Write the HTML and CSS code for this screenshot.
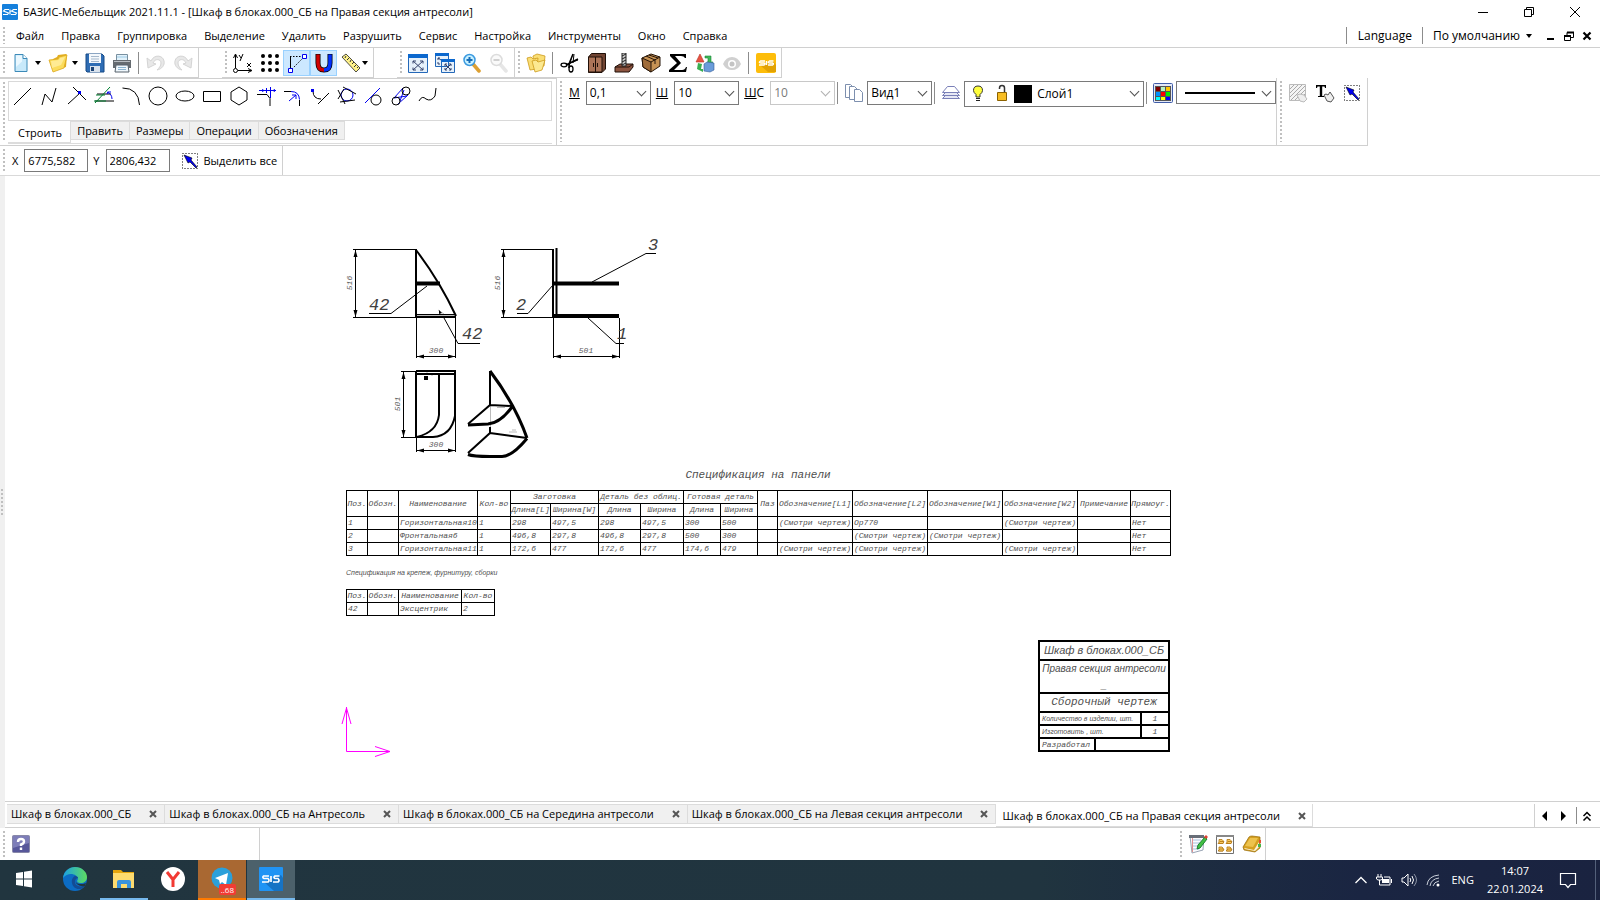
FILE: index.html
```html
<!DOCTYPE html>
<html lang="ru">
<head>
    <meta charset="UTF-8">
    <meta name="viewport" content="width=device-width, initial-scale=1.0">
    <title>БАЗИС-Мебельщик</title>
    <link rel="stylesheet" href="styles.css">
</head>
<body>
    <header class="title-bar">
        <svg class="app-logo" width="16" height="16" viewBox="0 0 16 16"><rect width="16" height="16" rx="1" fill="#1580dc"/><path d="M7 5.500H3L1.500 7l5 2-1 1.500H1M8 5.500v5M15 5.500h-3.500L9.500 7l5 2-1 1.500H9" fill="none" stroke="#fff" stroke-width="1.200"/></svg>
        <h1 class="title-text">БАЗИС-Мебельщик 2021.11.1 - [Шкаф в блоках.000_СБ на Правая секция антресоли]</h1>
        <div class="window-buttons">
            <button aria-label="Свернуть"><svg width="12" height="12" viewBox="0 0 12 12"><path d="M1 6.500h10" stroke="#000"/></svg></button>
            <button aria-label="Восстановить"><svg width="12" height="12" viewBox="0 0 12 12"><path d="M1.500 3.500h7v7h-7zM3.500 3.500v-2h7v7h-2" fill="none" stroke="#000"/></svg></button>
            <button aria-label="Закрыть"><svg width="12" height="12" viewBox="0 0 12 12"><path d="M1 1l10 10M11 1L1 11" stroke="#000"/></svg></button>
        </div>
    </header>

    <nav class="menu-bar">
        <span class="grip"></span>
        <div class="menu-items">
            <button>Файл</button>
            <button>Правка</button>
            <button>Группировка</button>
            <button>Выделение</button>
            <button>Удалить</button>
            <button>Разрушить</button>
            <button>Сервис</button>
            <button>Настройка</button>
            <button>Инструменты</button>
            <button>Окно</button>
            <button>Справка</button>
        </div>
        <div class="menu-right">
            <button class="menu-lang">Language</button>
            <button class="menu-theme">По умолчанию <span class="caret"></span></button>
            <button aria-label="Свернуть документ"><svg width="10" height="10" viewBox="0 0 10 10"><path d="M1 8h7" stroke="#000" stroke-width="2"/></svg></button>
            <button aria-label="Восстановить документ"><svg width="10" height="10" viewBox="0 0 10 10"><path d="M.5 4.500h6v5h-6zM3 4V1.500h6.500v5H7" fill="none" stroke="#000"/><path d="M0 5h7M3 1.500h7" stroke="#000" stroke-width="2"/></svg></button>
            <button aria-label="Закрыть документ"><svg width="10" height="10" viewBox="0 0 10 10"><path d="M1.500 1.500l7 7M8.500 1.500l-7 7" stroke="#000" stroke-width="2.200"/></svg></button>
        </div>
    </nav>

    <div class="toolbar-row">
        <div class="toolbar">
            <span class="grip"></span>
            <button class="tool tool-drop" aria-label="Новый"><svg width="20" height="20" viewBox="0 0 20 20"><path d="M4 1.500h8l4 4v13H4z" fill="#c8e9fa" stroke="#3c8ab8"/><path d="M5 2.500h6v6L5 14z" fill="#eaf8ff"/><path d="M12 1.500v4h4" fill="#fff" stroke="#3c8ab8"/></svg><span class="caret"></span></button>
            <button class="tool tool-drop" aria-label="Открыть"><svg width="20" height="20" viewBox="0 0 20 20"><path d="M5 6l4-2 1-2 8-1 1 1-1 12-10 3z" fill="#e2ae20"/><path d="M1 7l9-1 1-2 8-2-3 13-11 4z" fill="#fbdc5c" stroke="#dca820" stroke-width=".8"/><path d="M3 8l8-1 1-2 5-1-4 8-9 3z" fill="#ffeb94"/></svg><span class="caret"></span></button>
            <button class="tool" aria-label="Сохранить"><svg width="20" height="20" viewBox="0 0 20 20"><path d="M1 1h16l2 2v16H2l-1-1z" fill="#2f6db4" stroke="#164a86"/><path d="M4 1h12v9H4z" fill="#f4f8fc"/><path d="M6 3.500h8M6 6h8M6 8.500h8" stroke="#a5b8cc"/><path d="M5 13h10v6H5z" fill="#d9e2ec"/><path d="M6 14h3v4H6z" fill="#1d4476"/></svg></button>
            <button class="tool" aria-label="Печать"><svg width="20" height="20" viewBox="0 0 20 20"><path d="M4.500 1.500h11V8h-11z" fill="#e2f2fb" stroke="#7890a0"/><path d="M1 7h18v8H1z" fill="#666b70"/><path d="M2 8.500h16" stroke="#b8bdc2"/><path d="M4 12h12l1 7H3z" fill="#f0f7fc" stroke="#56616a"/><path d="M6 14.500h8M6 16.500h8" stroke="#8cb4d0"/><path d="M5 4h10" stroke="#9ecbe6"/></svg></button>
            <span class="separator"></span>
            <button class="tool" aria-label="Отменить" disabled><svg width="20" height="20" viewBox="0 0 20 20"><path d="M1 5l1 10 8-4-3-1c2-5 8-4 8 0 0 3-2 5-4 7 5-1 8-5 7-9C17 2 8 1 5 8z" fill="#e8e8e8" stroke="#d4d4d4"/></svg></button>
            <button class="tool" aria-label="Повторить" disabled><svg width="20" height="20" viewBox="0 0 20 20"><path d="M19 5l-1 10-8-4 3-1c-2-5-8-4-8 0 0 3 2 5 4 7-5-1-8-5-7-9C3 2 12 1 15 8z" fill="#e8e8e8" stroke="#d4d4d4"/></svg></button>
        </div>

        <div class="toolbar toolbar-detached">
            <span class="grip"></span>
            <button class="tool" aria-label="Система координат"><svg width="20" height="20" viewBox="0 0 20 20"><path d="M2.500 15V2M5 17.500h13M.5 5l2-4 2 4M15 15.500l4 2-4 2M6 2l2 3M10 1L7 8M14 10l4 4M18 10l-4 4" fill="none" stroke="#000"/><circle cx="2.500" cy="17.500" r="2" fill="#fff" stroke="#000"/></svg></button>
            <button class="tool" aria-label="Сетка"><svg width="20" height="20" viewBox="0 0 20 20"><g fill="#000"><circle cx="3" cy="3" r="2"/><circle cx="10" cy="3" r="2"/><circle cx="17" cy="3" r="2"/><circle cx="3" cy="10" r="2"/><circle cx="10" cy="10" r="2"/><circle cx="17" cy="10" r="2"/><circle cx="3" cy="17" r="2"/><circle cx="10" cy="17" r="2"/><circle cx="17" cy="17" r="2"/></g></svg></button>
            <button class="tool tool-active" aria-label="Привязка"><svg width="20" height="20" viewBox="0 0 20 20"><path d="M3.500 16V3.500" stroke="#000"/><path d="M3 3.500h12M5 16L16 5" stroke="#000" stroke-dasharray="1.500 1.500"/><path d="M1.500 15.500h4v4h-4zM15.500 1.500h4v4h-4z" fill="#fff" stroke="#0000f0"/></svg></button>
            <button class="tool tool-active" aria-label="Магнит"><svg width="20" height="20" viewBox="0 0 20 20"><path d="M4 1v9q0 7 6 7t6-7V1" fill="none" stroke="#000" stroke-width="5"/><path d="M4 1.500v8.500q0 7 6 7" fill="none" stroke="#d00000" stroke-width="3.500"/><path d="M16 1.500v8.500q0 7-6 7" fill="none" stroke="#0030ff" stroke-width="3.500"/></svg></button>
            <button class="tool tool-drop tool-ruler" aria-label="Измерение"><svg width="20" height="20" viewBox="0 0 20 20"><path d="M1 4l4-3 14 14-4 4z" fill="#fff28a" stroke="#222" stroke-width=".8"/><path d="M5 3L4 5M8 5L6 7M10 7l-1 2M13 9l-2 2M15 12l-2 2M17 14l-1 1" stroke="#333"/></svg><span class="caret"></span></button>
        </div>

        <div class="toolbar toolbar-detached">
            <span class="grip"></span>
            <button class="tool" aria-label="Показать всё"><svg width="20" height="20" viewBox="0 0 20 20"><path d="M.5 1.500h19v18H.5z" fill="#e6f1fb" stroke="#2468b8"/><path d="M0 1h20v4H0z" fill="#0c68ce"/><path d="M5 8l10 9M15 8L5 17M5 10.500V8h3M12 8h3v2.500M5 14.500V17h3M12 17h3v-2.500" fill="none" stroke="#34426c"/></svg></button>
            <button class="tool" aria-label="Показать все окна"><svg width="20" height="20" viewBox="0 0 20 20"><path d="M.5 1.500h13v12H.5zM6.500 7.500h13v12h-13z" fill="#e6f1fb" stroke="#2468b8"/><path d="M0 0h14v3H0zM6 6h14v3H6z" fill="#0c68ce"/><path d="M3 5l3 2M3 7V5h2M3 9v2h2M10 11l6 6M16 11l-6 6M10 13v-2h2M14 11h2v2M10 15v2h2M14 17h2v-2" fill="none" stroke="#34426c"/></svg></button>
            <button class="tool" aria-label="Увеличить"><svg width="20" height="20" viewBox="0 0 20 20"><path d="M11 11l6 7" stroke="#dda032" stroke-width="3.500" stroke-linecap="round"/><circle cx="7.500" cy="7" r="5.500" fill="#c8f1ff" stroke="#3c9ae0" stroke-width="1.500"/><path d="M4.500 7h6M7.500 4v6" stroke="#176cb8" stroke-width="2"/></svg></button>
            <button class="tool" aria-label="Уменьшить" disabled><svg width="20" height="20" viewBox="0 0 20 20"><path d="M11 11l6 7" stroke="#e6e6e6" stroke-width="3.500" stroke-linecap="round"/><circle cx="7.500" cy="7" r="5.500" fill="#fafafa" stroke="#dcdcdc" stroke-width="1.500"/><path d="M4.500 7h6" stroke="#d0d0d0" stroke-width="2"/></svg></button>
        </div>

        <div class="toolbar">
            <span class="grip"></span>
            <button class="tool" aria-label="Библиотека"><svg width="20" height="20" viewBox="0 0 20 20"><g fill="#fade74" stroke="#cd9b1c" stroke-width=".8"><path d="M7 3l4-2 8 2-1 10-10 1z"/><path d="M1 5l4-1 2 2 5-1-1 11-7 1z"/><path d="M6 8l4-1 2 2 7-2-3 10-7 2z" fill="#fce991"/></g></svg></button>
            <span class="separator"></span>
            <button class="tool" aria-label="Раскрой"><svg width="20" height="20" viewBox="0 0 20 20"><path d="M13 1L9 11v4M18 6L6 12" stroke="#000" stroke-width="1.500"/><path d="M14 1l-1 9M18 7l-8 3" stroke="#000"/><ellipse cx="4" cy="12" rx="3" ry="1.800" fill="none" stroke="#000" stroke-width="1.300"/><ellipse cx="11" cy="16" rx="2" ry="3" fill="none" stroke="#000" stroke-width="1.300"/></svg></button>
            <button class="tool" aria-label="Шкаф"><svg width="20" height="20" viewBox="0 0 20 20"><path d="M1.500 4l3-3.500h14V16L15 19.500H1.500z" fill="#704432" stroke="#201008"/><path d="M1.500 4H15v15H1.500z" fill="#ac7458" stroke="#201008"/><path d="M8.500 4v15M6.500 10v4M10.500 10v4" stroke="#201008"/></svg></button>
            <button class="tool" aria-label="Крепёж"><svg width="20" height="20" viewBox="0 0 20 20"><path d="M1 14l5-3h13v3l-4 5H1z" fill="#8c5440" stroke="#201008"/><path d="M1 14h14l4-3" fill="none" stroke="#201008"/><path d="M8 0h4v13H8z" fill="#ccc" stroke="#222"/><path d="M8 3l4-2M8 6l4-2M8 9l4-2M8 12l4-2" stroke="#222"/></svg></button>
            <button class="tool" aria-label="Упаковка"><svg width="20" height="20" viewBox="0 0 20 20"><path d="M1 5l9-4 9 3v9l-9 6-8-5z" fill="#c69254" stroke="#241408"/><path d="M1 5l9 4v10l-8-5z" fill="#a06c3a" stroke="#241408"/><path d="M10 9l9-5M5 3l9 4v4M8 2l9 3" fill="none" stroke="#241408"/></svg></button>
            <button class="tool" aria-label="Смета"><svg width="20" height="20" viewBox="0 0 20 20"><path d="M2 1h16v4h-1q-1-2-4-2H7l6 7-7 7h8q3 0 4-3h1l-1 5H1v-2l8-7-7-7z" fill="#000"/></svg></button>
            <button class="tool" aria-label="Обновить модель"><svg width="20" height="20" viewBox="0 0 20 20"><path d="M5 1l4 8H1z" fill="#e75342" stroke="#b53024" stroke-width=".6"/><path d="M10 3h6v6l2 0-3 3-3-3h1V5h-3z" fill="#40b858" stroke="#19863a" stroke-width=".6"/><path d="M9 11l3-2 7 1v7l-4 2-6-1z" fill="#6a9cda" stroke="#365e98" stroke-width=".6"/><path d="M3 10l4 1-1 5H8v3l-6-3z" fill="#38b050"/></svg></button>
            <button class="tool" aria-label="Просмотр" disabled><svg width="20" height="20" viewBox="0 0 20 20"><path d="M1 11q3-7 9-7t9 7q-3 6-9 6t-9-6z" fill="#d0d0d0"/><circle cx="10" cy="11" r="4" fill="#fff"/><circle cx="10" cy="11" r="2.500" fill="#c4c4c4"/></svg></button>
            <span class="separator"></span>
            <button class="tool" aria-label="БАЗИС"><svg width="20" height="20" viewBox="0 0 20 20"><rect width="20" height="20" rx="2" fill="#fdbd0a"/><path d="M5 13l12-5 3 4v7h-8z" fill="#e2a203"/><path d="M9 8H4.500Q2 9.500 5 10h3q2 1 0 2H3M10.500 12V8M17.500 8h-4q-2.500 1.500 0 2h3q2 1 0 2h-4.500" fill="none" stroke="#fff" stroke-width="1.400"/></svg></button>
        </div>
    </div>

    <div class="panel-row">
        <section class="draw-panel">
            <span class="grip"></span>
            <div class="draw-content">
                <div class="draw-tools">
                    <button class="tool" aria-label="Отрезок"><svg width="20" height="20" viewBox="0 0 20 20"><path d="M1 19L18 2" stroke="#000"/></svg></button>
                    <button class="tool" aria-label="Ломаная"><svg width="20" height="20" viewBox="0 0 20 20"><path d="M2 19L5 8l7 8 4-14" fill="none" stroke="#000"/></svg></button>
                    <button class="tool" aria-label="Перпендикуляр"><svg width="20" height="20" viewBox="0 0 20 20"><path d="M1 18L13 7M6 1l13 13" stroke="#000"/><path d="M11 5h3v3h-3z" fill="#0000f0"/></svg></button>
                    <button class="tool" aria-label="Отрезок под углом"><svg width="20" height="20" viewBox="0 0 20 20"><path d="M1 15h19M3 8h14" stroke="#000"/><path d="M1 17L16 1M0 15h12M2 9h9" stroke="#008030"/><path d="M13 6q5 2 5 7M13 8l1-2 3 0" fill="none" stroke="#0000f0"/></svg></button>
                    <button class="tool" aria-label="Дуга"><svg width="20" height="20" viewBox="0 0 20 20"><path d="M1.500 2q16 0 17 17" fill="none" stroke="#000"/></svg></button>
                    <button class="tool" aria-label="Окружность"><svg width="20" height="20" viewBox="0 0 20 20"><circle cx="10" cy="10" r="9" fill="none" stroke="#000"/></svg></button>
                    <button class="tool" aria-label="Эллипс"><svg width="20" height="20" viewBox="0 0 20 20"><ellipse cx="10" cy="10" rx="9" ry="5" fill="none" stroke="#000"/></svg></button>
                    <button class="tool" aria-label="Прямоугольник"><svg width="20" height="20" viewBox="0 0 20 20"><path d="M1.500 5.500h17v10h-17z" fill="none" stroke="#000"/></svg></button>
                    <button class="tool" aria-label="Многоугольник"><svg width="20" height="20" viewBox="0 0 20 20"><path d="M10 1l8 5v8l-8 5-8-5V6z" fill="none" stroke="#000"/></svg></button>
                    <button class="tool" aria-label="Продлить"><svg width="20" height="20" viewBox="0 0 20 20"><path d="M1 8.500h10l3 4V20" fill="none" stroke="#000"/><path d="M3 4.500h17M14.500 1v11M10.500 2v5" stroke="#0000f0"/><path d="M6 3v3l3-1.500zM19 3v3l-3-1.500z" fill="#0000f0"/></svg></button>
                    <button class="tool" aria-label="Скругление"><svg width="20" height="20" viewBox="0 0 20 20"><path d="M1 5.500h7M16.500 14v6" fill="none" stroke="#000"/><path d="M8 5.500q8 0 8.500 8M6 15l7-6M9 9h4v4" fill="none" stroke="#0000f0"/></svg></button>
                    <button class="tool" aria-label="Касательная"><svg width="20" height="20" viewBox="0 0 20 20"><path d="M8 18L19 7" stroke="#000"/><path d="M3 5q0 8 8 8" fill="none" stroke="#000"/><path d="M1 3h3v3H1z" fill="#0000f0"/></svg></button>
                    <button class="tool" aria-label="Вписанная окружность"><svg width="20" height="20" viewBox="0 0 20 20"><circle cx="10" cy="9" r="6" fill="none" stroke="#0000f0"/><path d="M6 1l13 7M1 4l7 14M3 16l15-2M1 13l6-10" stroke="#000"/></svg></button>
                    <button class="tool" aria-label="Окружность по касательной"><svg width="20" height="20" viewBox="0 0 20 20"><path d="M1 17L16 2" stroke="#0000f0"/><circle cx="12" cy="14" r="5" fill="none" stroke="#000"/></svg></button>
                    <button class="tool" aria-label="Касательная к окружностям"><svg width="20" height="20" viewBox="0 0 20 20"><path d="M3 12L12 2M7 18l10-9M3 12l13-2M9 15l4-11" stroke="#0000f0"/><circle cx="5" cy="15" r="4" fill="none" stroke="#000"/><circle cx="15" cy="5" r="4" fill="none" stroke="#000"/></svg></button>
                    <button class="tool" aria-label="Кривая"><svg width="20" height="20" viewBox="0 0 20 20"><path d="M1 15q3-6 7-2 5 3 9-3l1-8" fill="none" stroke="#000"/></svg></button>
                </div>
                <div class="draw-tabs">
                    <button class="draw-tab draw-tab-active">Строить</button>
                    <button class="draw-tab">Править</button>
                    <button class="draw-tab">Размеры</button>
                    <button class="draw-tab">Операции</button>
                    <button class="draw-tab">Обозначения</button>
                </div>
            </div>
        </section>

        <section class="props-panel">
            <span class="grip"></span>
            <label for="scale"><u>М</u></label>
            <span class="combo"><select id="scale"><option>0,1</option></select></span>
            <label for="width"><u>Ш</u></label>
            <span class="combo"><select id="width"><option>10</option></select></span>
            <label for="widthC"><u>Ш</u>С</label>
            <span class="combo combo-off"><select id="widthC" disabled><option>10</option></select></span>
            <span class="separator"></span>
            <button class="tool" aria-label="Виды"><svg width="20" height="20" viewBox="0 0 20 20"><g fill="#fff" stroke="#7d8fae"><path d="M1.500 1.500h5l3 3v10h-8z"/><path d="M5.500 3.500h5l3 3v10h-8z"/><path d="M10.500 6.500h5l3 3v9h-8z"/></g></svg></button>
            <span class="combo"><select aria-label="Вид"><option>Вид1</option></select></span>
            <span class="separator"></span>
            <button class="tool" aria-label="Слои"><svg width="20" height="20" viewBox="0 0 20 20"><g fill="#e6e8f5" stroke="#7a80b8"><path d="M1.500 15.500l3-3h11l3 3z"/><path d="M1.500 12.500l3-3h11l3 3z"/><path d="M1.500 9.500l5-6h7l5 6z" fill="#fff"/></g></svg></button>
            <span class="combo combo-layer">
                <select aria-label="Слой"><option>Слой1</option></select>
                <svg class="layer-marks" width="64" height="22" viewBox="0 0 64 22"><path d="M9 3q4.500 0 4.500 4.500 0 2-2.500 4V14H7v-2.500q-2.500-2-2.500-4Q4.500 3 9 3z" fill="#ffff3c" stroke="#333"/><path d="M7 15.500h4M7 17.500h4" stroke="#222"/><path d="M30.500 6V5q0-2.500 2.500-2.500T35.500 5v5" fill="none" stroke="#333" stroke-width="1.500"/><path d="M28.500 9.500h9v8h-9z" fill="#f7bd22" stroke="#8c6200"/><path d="M45 2h18v18H45z" fill="#000"/></svg>
            </span>
            <span class="separator"></span>
            <button class="tool" aria-label="Цвет"><svg width="20" height="20" viewBox="0 0 20 20"><rect x=".5" y=".5" width="19" height="19" rx="1" fill="#e3e8f6" stroke="#3f5ca8"/><path d="M2 3h16v15H2z" fill="#555"/><path d="M3 4h4v4H3z" fill="#800000"/><path d="M8 4h4v4H8z" fill="#b8f0c0"/><path d="M13 4h4v4h-4z" fill="#ffc400"/><path d="M3 9h4v4H3z" fill="#0090ff"/><path d="M8 9h4v4H8z" fill="#f00"/><path d="M13 9h4v4h-4z" fill="#0e0"/><path d="M3 14h4v3H3z" fill="#0ff"/><path d="M8 14h4v3H8z" fill="#ff0"/><path d="M13 14h4v3h-4z" fill="#00f"/></svg></button>
            <span class="combo combo-line">
                <select aria-label="Тип линии"><option></option></select>
                <svg class="line-sample" width="70" height="2" viewBox="0 0 70 2"><path d="M0 1h70" stroke="#000" stroke-width="2"/></svg>
            </span>
        </section>

        <section class="select-panel">
            <span class="grip"></span>
            <button class="tool" aria-label="Штриховка"><svg width="20" height="20" viewBox="0 0 20 20"><path d="M1.500 1.500h16v16h-16z" fill="#f4f4f4" stroke="#bbb"/><path d="M2 6l4-4M2 10l8-8M2 14l12-12M3 17L17 3M7 17L17 7M11 17l6-6" stroke="#aaa"/><path d="M9 12l3-1 4 1 3 4-3 3-4-1z" fill="#eee" stroke="#bbb"/></svg></button>
            <button class="tool" aria-label="Текст"><svg width="20" height="20" viewBox="0 0 20 20"><path d="M1 5V2h10v3h-1L9.500 3.500H7.200V13H9v1H3v-1h1.800V3.500H2.500L2 5z" fill="#000"/><path d="M9 12l2-1 2 1 2-3 4 6-3 4-4-1z" fill="#eee" stroke="#555"/></svg></button>
            <button class="tool" aria-label="Выделить"><svg width="20" height="20" viewBox="0 0 20 20"><path d="M2.500 2.500h15v15h-15z" fill="none" stroke="#000" stroke-dasharray="1 2"/><path d="M4 4l8 3-1 2 6 7-1 1-6-6-2 1z" fill="#0000f0" stroke="#000" stroke-width=".6"/></svg></button>
        </section>
    </div>

    <form class="coord-bar">
        <span class="grip"></span>
        <label for="coordX">X</label>
        <input id="coordX" type="text" value="6775,582">
        <label for="coordY">Y</label>
        <input id="coordY" type="text" value="2806,432">
        <button class="select-all" type="button"><svg width="20" height="20" viewBox="0 0 20 20"><path d="M2.500 2.500h15v15h-15z" fill="none" stroke="#000" stroke-dasharray="1 2"/><path d="M4 4l8 3-1 2 6 7-1 1-6-6-2 1z" fill="#0000f0" stroke="#000" stroke-width=".6"/></svg>Выделить все</button>
    </form>

    <main class="workspace">
        <div class="side-strip"><span class="grip"></span></div>
        <div class="workspace-body">
            <div class="canvas">
                <div class="sheet">
                    <svg class="drawing" width="320" height="230" viewBox="346 236 320 230">
                        <defs>
                            <marker id="arrow" viewBox="0 0 8 6" refX="8" refY="3" markerWidth="8" markerHeight="6" markerUnits="userSpaceOnUse" orient="auto-start-reverse"><path d="M8 3L1 1v4z"/></marker>
                        </defs>
                        <g class="thin">
                            <path d="M353 249.500h64M353 317.500h64M416.500 318v40M455.500 318v40M501 249.500h53M501 317.500h53M553.500 318v40M619.500 318v40M401 371.500h16M401 437.500h16M416.500 438v14M455.500 416v36"/>
                            <path d="M427 286L391 313.500h-22M444 318l14 25.500h22M553 285l-25 28.500h-11M588 318l28 25.500h8M592 282l54-28.500h10"/>
                            <path class="dim" d="M355.500 250v67"/>
                            <path class="dim" d="M503.500 250v67"/>
                            <path class="dim" d="M403.500 372v65"/>
                            <path class="dim" d="M417 356.500h38"/>
                            <path class="dim" d="M554 356.500h65"/>
                            <path class="dim" d="M417 450.500h38"/>
                        </g>
                        <g class="faint"><path d="M490.500 405v22M497 407.500h8M509 432h8M512 430h4M427 372v3M431 375h2M438 310l6 4"/><path d="M417 315.500h38"/></g>
                        <g class="bold">
                            <path d="M416 249v69M416 250q23 30 40 66M416 317h40M553 249v69M556.500 248v68M416 371h40M416 374h40M416 371v66M455 371v45q-4 20-22 21h-16M439 374v41q-2 17-22 22"/>
                            <path d="M490 371v34l-22 19M490 405l22 1M490 427v6l-22 20M490 433l37 5"/>
                        </g>
                        <path class="thin" d="M417 314.500h39"/>
                        <g class="heavy">
                            <path d="M416 283.500h24M554 283.500h65M554 316h65"/>
                            <path class="solid" d="M490 371q25 33 37 67M468 425l20-1q12-1 24-17M468 454.500q5 2 22 2h12q10 0 25-18"/>
                        </g>
                        <path d="M424 376h4v4h-4zM439 310l3 3-3 1z"/>
                        <g class="callout">
                            <text x="369" y="310">42</text>
                            <text x="462" y="339">42</text>
                            <text x="516" y="310">2</text>
                            <text x="648" y="250">3</text>
                            <text x="617" y="339">1</text>
                        </g>
                        <g class="dim-text">
                            <text x="436" y="353">300</text>
                            <text x="586" y="353">501</text>
                            <text x="436" y="447">300</text>
                            <text transform="translate(352 283) rotate(-90)">516</text>
                            <text transform="translate(500 283) rotate(-90)">516</text>
                            <text transform="translate(400 404) rotate(-90)">501</text>
                        </g>
                    </svg>

                    <h2 class="spec-title">Спецификация на панели</h2>
                    <table class="spec">
                        <colgroup><col class="w-pos"><col class="w-mark"><col class="w-name"><col class="w-qty"><col class="w-l"><col class="w-w"><col class="w-dl"><col class="w-dw"><col class="w-gl"><col class="w-gw"><col class="w-paz"><col class="w-edge"><col class="w-edge"><col class="w-edge"><col class="w-edge"><col class="w-note"><col class="w-rect"></colgroup>
                        <thead>
                            <tr><th rowspan="2">Поз.</th><th rowspan="2">Обозн.</th><th rowspan="2">Наименование</th><th rowspan="2">Кол-во</th><th colspan="2">Заготовка</th><th colspan="2">Деталь без облиц.</th><th colspan="2">Готовая деталь</th><th rowspan="2">Паз</th><th rowspan="2">Обозначение[L1]</th><th rowspan="2">Обозначение[L2]</th><th rowspan="2">Обозначение[W1]</th><th rowspan="2">Обозначение[W2]</th><th rowspan="2">Примечание</th><th rowspan="2">Прямоуг.</th></tr>
                            <tr><th>Длина[L]</th><th>Ширина[W]</th><th>Длина</th><th>Ширина</th><th>Длина</th><th>Ширина</th></tr>
                        </thead>
                        <tbody>
                            <tr><td>1</td><td></td><td>Горизонтальная10</td><td>1</td><td>298</td><td>497,5</td><td>298</td><td>497,5</td><td>300</td><td>500</td><td></td><td>(Смотри чертеж)</td><td>Ор770</td><td></td><td>(Смотри чертеж)</td><td></td><td>Нет</td></tr>
                            <tr><td>2</td><td></td><td>Фронтальная6</td><td>1</td><td>496,8</td><td>297,8</td><td>496,8</td><td>297,8</td><td>500</td><td>300</td><td></td><td></td><td>(Смотри чертеж)</td><td>(Смотри чертеж)</td><td></td><td></td><td>Нет</td></tr>
                            <tr><td>3</td><td></td><td>Горизонтальная11</td><td>1</td><td>172,6</td><td>477</td><td>172,6</td><td>477</td><td>174,6</td><td>479</td><td></td><td>(Смотри чертеж)</td><td>(Смотри чертеж)</td><td></td><td>(Смотри чертеж)</td><td></td><td>Нет</td></tr>
                        </tbody>
                    </table>

                    <h2 class="spec-subtitle">Спецификация на крепеж, фурнитуру, сборки</h2>
                    <table class="spec spec-small">
                        <colgroup><col class="w-pos"><col class="w-mark"><col class="w-fit"><col class="w-qty"></colgroup>
                        <thead>
                            <tr><th>Поз.</th><th>Обозн.</th><th>Наименование</th><th>Кол-во</th></tr>
                        </thead>
                        <tbody>
                            <tr><td>42</td><td></td><td>Эксцентрик</td><td>2</td></tr>
                        </tbody>
                    </table>

                    <div class="sheet-bottom">
                        <svg class="axes" width="46" height="46" viewBox="0 0 46 46"><path d="M.5 1v44.500H44M-4 18L.5 2 5 18M29 40.500l15 5-15 5" fill="none" stroke="#f0f"/></svg>
                        <div class="stamp">
                            <div class="stamp-code">Шкаф в блоках.000_СБ</div>
                            <div class="stamp-name">Правая секция антресоли<br>_</div>
                            <div class="stamp-type">Сборочный чертеж</div>
                            <div class="stamp-line"><span>Количество в изделии, шт.</span><b>1</b></div>
                            <div class="stamp-line"><span>Изготовить , шт.</span><b>1</b></div>
                            <div class="stamp-author"><span>Разработал</span></div>
                        </div>
                    </div>
                </div>
            </div>

            <div class="doc-tabs">
                <div class="doc-tab"><a href="#">Шкаф в блоках.000_СБ</a><button aria-label="Закрыть вкладку"><svg width="8" height="8" viewBox="0 0 8 8"><path d="M1 1l6 6M7 1L1 7"/></svg></button></div>
                <div class="doc-tab"><a href="#">Шкаф в блоках.000_СБ на Антресоль</a><button aria-label="Закрыть вкладку"><svg width="8" height="8" viewBox="0 0 8 8"><path d="M1 1l6 6M7 1L1 7"/></svg></button></div>
                <div class="doc-tab"><a href="#">Шкаф в блоках.000_СБ на Середина антресоли</a><button aria-label="Закрыть вкладку"><svg width="8" height="8" viewBox="0 0 8 8"><path d="M1 1l6 6M7 1L1 7"/></svg></button></div>
                <div class="doc-tab"><a href="#">Шкаф в блоках.000_СБ на Левая секция антресоли</a><button aria-label="Закрыть вкладку"><svg width="8" height="8" viewBox="0 0 8 8"><path d="M1 1l6 6M7 1L1 7"/></svg></button></div>
                <div class="doc-tab doc-tab-active"><a href="#">Шкаф в блоках.000_СБ на Правая секция антресоли</a><button aria-label="Закрыть вкладку"><svg width="8" height="8" viewBox="0 0 8 8"><path d="M1 1l6 6M7 1L1 7"/></svg></button></div>
                <div class="doc-nav">
                    <button aria-label="Назад"><svg width="10" height="10" viewBox="0 0 10 10"><path d="M7 0v10L2 5z"/></svg></button>
                    <button aria-label="Вперёд"><svg width="10" height="10" viewBox="0 0 10 10"><path d="M3 0v10l5-5z"/></svg></button>
                    <button class="doc-list" aria-label="Список"><svg width="10" height="10" viewBox="0 0 10 10"><path d="M1.500 5L5 1.500 8.500 5M1.500 9.500L5 6l3.500 3.500" fill="none" stroke="#000" stroke-width="1.500"/></svg></button>
                </div>
            </div>
        </div>
    </main>

    <div class="status-bar">
        <div class="status-help">
            <span class="grip"></span>
            <button class="tool" aria-label="Справка"><svg width="18" height="18" viewBox="0 0 18 18"><rect x=".5" y=".5" width="17" height="17" rx="1" fill="#57579a" stroke="#8888a8"/><path d="M1 1h16v7L1 13z" fill="#7d7db8"/><path d="M6 7q0-3 3-3t3 2.500q0 2-3 3V11M9 12.500V15" fill="none" stroke="#fff" stroke-width="2.400"/></svg></button>
        </div>
        <div class="status-tools">
            <span class="grip"></span>
            <button class="tool" aria-label="Заметки"><svg width="20" height="20" viewBox="0 0 20 20"><path d="M2 2h14l-1 14-11 3z" fill="#fafcff" stroke="#9aa4b4"/><path d="M1 1h15v3H1z" fill="#686e78"/><path d="M5 6h8M5 9h7M5 12h6M4 15h7" stroke="#a8c0dc"/><path d="M4.500 4v14" stroke="#e09090"/><path d="M17 3l2 2-7 9-3 1 1-4z" fill="#42c044" stroke="#1a8030"/><path d="M16 3l2-2 2 2-2 2z" fill="#e04030"/></svg></button>
            <button class="tool" aria-label="Проекты"><svg width="20" height="20" viewBox="0 0 20 20"><path d="M1.500 1.500h17v18h-17z" fill="#fff" stroke="#707070"/><path d="M1 1h18v2H1z" fill="#888"/><g fill="#f8ca62" stroke="#b07410" stroke-width=".8"><path d="M4 5.500h3l1 1v3H4zM12 5.500h3l1 1v3h-4zM4 13h3l1 1v3H4zM12 13h3l1 1v3h-4z"/><path d="M3 9.500l2-2h4l-1 2zM11 9.500l2-2h4l-1 2zM3 17l2-2h4l-1 2zM11 17l2-2h4l-1 2z"/></g></svg></button>
            <button class="tool" aria-label="Справочник"><svg width="20" height="20" viewBox="0 0 20 20"><path d="M1 13L7 3q1-1 3-1l8 1v11l-5 4-11-2z" fill="#d5a020" stroke="#966904" stroke-width=".7"/><path d="M2 14l10 2 5-8v5l-4 4-10-2z" fill="#f8f2dc"/><path d="M8 4l8 0-5 9-8-1z" fill="#edc24d"/><path d="M17 6h2v3h-2z" fill="#e35035"/><path d="M16 10h3v3h-3z" fill="#45b545"/></svg></button>
        </div>
    </div>

    <footer class="taskbar">
        <button class="task" aria-label="Пуск"><svg width="18" height="18" viewBox="0 0 18 18"><path d="M1 3l7-1v6.500H1zM9 1.800L17 .5v8H9zM1 9.500h7V16l-7-1zM9 9.500h8v8l-8-1.300z" fill="#fff"/></svg></button>
        <button class="task" aria-label="Edge"><svg width="24" height="24" viewBox="0 0 24 24"><defs><linearGradient id="edgeTop"><stop offset="0" stop-color="#1ba0e4"/><stop offset="1" stop-color="#5edc60"/></linearGradient></defs><circle cx="12" cy="12" r="12" fill="#0c6cc4"/><path d="M0 11C1 4 6 0 12 0c7 0 12 5 12 10 0 4-3 6-6 6s-5-1-3-4c0-5-10-8-15-1z" fill="url(#edgeTop)"/><path d="M12 9c-6 3-3 14 5 13 2 0 4-2 5-4-4 3-11 1-10-4 0-2 2-3 3-3 0-1-1-2-3-2z" fill="#144c94"/><path d="M13 12c-1 2 0 5 4 5 2 0 4 0 6-1l-1 3c-5 1-11-2-9-7z" fill="#21353f"/></svg></button>
        <button class="task task-open" aria-label="Проводник"><svg width="24" height="24" viewBox="0 0 24 24"><path d="M1 3h8l2 2h11v5H1z" fill="#e5a50d"/><path d="M1 6h21v15H1z" fill="#fedb6e"/><path d="M5 21v-6q0-2 2-2h10q2 0 2 2v6h-4v-4H9v4z" fill="#3a93dc"/></svg></button>
        <button class="task" aria-label="Яндекс"><svg width="24" height="24" viewBox="0 0 24 24"><circle cx="12" cy="12" r="12" fill="#fff"/><path d="M6 5l6 7.500L18 5M12 12v8" fill="none" stroke="#f23a33" stroke-width="3"/></svg></button>
        <button class="task task-alert" aria-label="Telegram"><svg width="24" height="24" viewBox="0 0 24 24"><circle cx="12" cy="11" r="10.500" fill="#2ba0da"/><path d="M5 11l13-5-2 12-4-3-2 2-1-4z" fill="#fff"/></svg><span class="badge">..68</span></button>
        <button class="task task-current" aria-label="БАЗИС"><svg width="24" height="24" viewBox="0 0 24 24"><rect width="24" height="24" rx="1" fill="#2094f4"/><path d="M5 15l17-7 2 3v13h-9z" fill="#1673c4"/><path d="M10 9H4.500Q3 10.500 5 11.500h4q2 2 0 3.500H3M12 15V9M20.500 9H16q-2 1.500 0 2.500h3q2 2 0 3.500h-5" fill="none" stroke="#fff" stroke-width="1.700"/></svg></button>

        <div class="tray">
            <button aria-label="Скрытые значки"><svg width="12" height="16" viewBox="0 0 12 16"><path d="M.5 11L6 5.500l5.500 5.500" fill="none" stroke="#fff" stroke-width="1.300"/></svg></button>
            <button aria-label="Батарея"><svg width="16" height="16" viewBox="0 0 16 16"><path d="M2 2v3M5 2v3M.5 5h6v2L5 8H2L.5 7zM3.500 8v5H14V5H8" fill="none" stroke="#fff"/><path d="M6 7h7v4H6zM15 7h1v4h-1z" fill="#fff"/></svg></button>
            <button aria-label="Громкость"><svg width="16" height="16" viewBox="0 0 16 16"><path d="M1 6h2l4-4v12l-4-4H1zM9 6q1.500 2 0 4M11 4q3 4 0 8" fill="none" stroke="#fff"/><path d="M13 2q5 6 0 12" fill="none" stroke="#8a93a4"/></svg></button>
            <button aria-label="Сеть"><svg width="14" height="16" viewBox="0 0 14 16"><path d="M1 13Q2 4 13 3M4 14q1-7 9-8M7 14q1-4 6-5" fill="none" stroke="#c8ced8"/><circle cx="12" cy="13" r="1.500" fill="#fff"/></svg></button>
            <span class="lang">ENG</span>
            <time class="clock">14:07<br>22.01.2024</time>
            <button class="notify" aria-label="Уведомления"><svg width="18" height="18" viewBox="0 0 18 18"><path d="M1.500 2.500h15v11h-5l-2.500 3-2.500-3h-5z" fill="none" stroke="#fff" stroke-width="1.200"/></svg></button>
        </div>
    </footer>
</body>
</html>
```

FILE: styles.css
```css
* {
    box-sizing: border-box;
}

body {
    margin: 0;
    min-height: 100vh;
    display: flex;
    flex-direction: column;
    background-color: #fff;
    color: #000;
    font-family: "Open Sans", "Noto Sans", sans-serif;
    font-size: 11px;
    line-height: 16px;
}

button {
    display: flex;
    align-items: center;
    justify-content: center;
    padding: 0;
    border: none;
    background: none;
    color: inherit;
    font: inherit;
    white-space: nowrap;
}

svg {
    display: block;
    flex: none;
}

.grip {
    flex: none;
    align-self: stretch;
    width: 2px;
    margin: 3px 2px 3px 3px;
    background: repeating-linear-gradient(#c0c0c0 0 2px, transparent 2px 4px);
}

.separator {
    flex: none;
    width: 1px;
    height: 22px;
    margin: 0 3px;
    background-color: #8c8c8c;
}

.caret {
    border: 3px solid transparent;
    border-top: 4px solid #000;
    border-bottom: none;
}

/* title bar and menu */
.title-bar {
    display: flex;
    align-items: center;
    height: 24px;
    padding: 0 2px;
}

.title-text {
    flex: 1;
    margin: 0 0 0 5px;
    font-size: 11px;
    font-weight: normal;
}

.window-buttons {
    display: flex;
}

.window-buttons button {
    width: 46px;
    height: 20px;
}

.menu-bar {
    display: flex;
    align-items: center;
    height: 24px;
    border-bottom: 1px solid #d0d0d0;
}

.menu-items {
    display: flex;
    flex: 1;
    gap: 17px;
    padding-left: 9px;
}

.menu-right {
    display: flex;
    align-items: center;
    gap: 8px;
    padding-right: 8px;
    font-size: 12px;
}

.menu-right button {
    height: 17px;
}

.menu-right .menu-lang {
    padding: 0 2px 0 11px;
    border-left: 1px solid #8c8c8c;
}

.menu-right .menu-theme {
    gap: 6px;
    padding: 0 6px 0 10px;
    border-left: 1px solid #8c8c8c;
}

/* toolbars */
.toolbar-row {
    display: flex;
    height: 30px;
}

.toolbar {
    display: flex;
    align-items: center;
    padding-right: 2px;
    border-right: 1px solid #d0d0d0;
    border-bottom: 1px solid #d0d0d0;
}

.toolbar-detached {
    margin-left: 23px;
}

.tool {
    flex: none;
    width: 27px;
    height: 26px;
}

.tool-drop {
    width: 37px;
    gap: 4px;
}

.tool-ruler {
    width: 34px;
    gap: 1px;
}

.tool-active {
    background-color: #cce8ff;
    border: 1px solid #99d1ff;
}

.panel-row {
    display: flex;
    height: 68px;
}

.draw-panel {
    display: flex;
    width: 557px;
    border-right: 1px solid #d0d0d0;
    border-bottom: 1px solid #d0d0d0;
    border-top: 1px solid #d0d0d0;
}

.draw-content {
    flex: 1;
    margin: 2px 4px 1px 1px;
    border-bottom: 1px solid #dcdcdc;
}

.draw-tools {
    display: flex;
    height: 40px;
    padding-top: 1px;
    border: 1px solid #d9d9d9;
}

.draw-tabs {
    display: flex;
    align-items: flex-start;
}

.draw-tab {
    height: 19px;
    padding: 0 6px;
    border: 1px solid #dcdcdc;
    border-left: none;
    background-color: #f0f0f0;
}

.draw-tab-active {
    height: 22px;
    padding: 2px 8px 0 10px;
    border-top: none;
    background-color: #fff;
}

.props-panel {
    display: flex;
    width: 720px;
    align-items: flex-start;
    border-bottom: 1px solid #d0d0d0;
    border-right: 1px solid #d0d0d0;
    font-size: 12px;
}

.props-panel label {
    padding: 7px 6px 0 5px;
}

.props-panel .tool {
    margin-top: 2px;
}

.props-panel .separator {
    margin: 4px 2px 0;
}

.combo {
    position: relative;
    display: flex;
    flex: none;
    margin-top: 3px;
}

.combo::after {
    content: "";
    position: absolute;
    right: 6px;
    top: 7px;
    width: 6px;
    height: 6px;
    border: solid #505050;
    border-width: 0 1px 1px 0;
    transform: rotate(45deg);
}

.combo select {
    width: 65px;
    height: 24px;
    padding: 0 3px;
    border: 1px solid #7a7a7a;
    border-radius: 0;
    background-color: #fff;
    color: #000;
    font: inherit;
    appearance: none;
}

.combo-off select {
    border-color: #c8c8c8;
    color: #7a7a7a;
    opacity: 1;
}

.combo-off::after {
    border-color: #b0b0b0;
}

.combo-layer select {
    width: 180px;
    height: 26px;
    padding-left: 72px;
}

.layer-marks {
    position: absolute;
    left: 5px;
    top: 2px;
}

.combo-line select {
    width: 100px;
    height: 23px;
}

.line-sample {
    position: absolute;
    left: 9px;
    top: 11px;
}

.select-panel {
    display: flex;
    align-items: flex-start;
    width: 91px;
    border-right: 1px solid #d0d0d0;
    border-bottom: 1px solid #d0d0d0;
}

.select-panel .tool {
    margin-top: 2px;
}

.coord-bar {
    display: flex;
    align-items: center;
    height: 30px;
    border-bottom: 1px solid #d9d9d9;
}

.coord-bar label {
    padding: 0 6px 0 5px;
}

.coord-bar input {
    width: 64px;
    height: 23px;
    padding: 0 3px;
    border: 1px solid #7a7a7a;
    font: inherit;
}

.select-all {
    align-self: stretch;
    gap: 4px;
    padding: 0 5px 0 10px;
    border-right: 1px solid #d0d0d0;
}

/* drawing area */
.workspace {
    display: flex;
    flex: 1;
}

.side-strip {
    display: flex;
    align-items: center;
    width: 5px;
    background-color: #f0f0f0;
}

.side-strip .grip {
    align-self: center;
    height: 26px;
    margin: 0 1px;
}

.workspace-body {
    display: flex;
    flex: 1;
    flex-direction: column;
}

.canvas {
    flex: 1;
    padding: 60px 0 0 341px;
}

.sheet {
    width: 824px;
    color: #505050;
    font-family: "Liberation Mono", monospace;
    font-size: 8px;
    font-style: italic;
    line-height: 10px;
}

.drawing,
.axes {
    overflow: visible;
}

.thin {
    fill: none;
    stroke: #000;
    stroke-width: 1px;
}

.dim {
    marker-start: url(#arrow);
    marker-end: url(#arrow);
}

.bold {
    fill: none;
    stroke: #000;
    stroke-width: 2px;
}

.heavy {
    fill: none;
    stroke: #000;
    stroke-width: 4px;
}

.heavy .solid {
    stroke-width: 3px;
}

.faint {
    fill: none;
    stroke: #bbb;
}

.callout {
    fill: #404040;
    font-family: "Liberation Mono", monospace;
    font-size: 17px;
}

.dim-text {
    fill: #606060;
    font-family: "Liberation Mono", monospace;
    font-size: 8px;
    text-anchor: middle;
}

.spec-title {
    margin: 0 0 6px;
    font-size: 11px;
    font-weight: normal;
    line-height: 18px;
    text-align: center;
}

.spec-subtitle {
    margin: 9px 0 8px;
    font-family: "Liberation Sans", sans-serif;
    font-size: 7px;
    font-weight: normal;
    line-height: 16px;
}

.spec {
    width: 100%;
    border-collapse: collapse;
    table-layout: fixed;
}

.spec th,
.spec td {
    height: 13px;
    padding: 0 0 0 1px;
    border: 1px solid #000;
    font-weight: normal;
    text-align: left;
    white-space: nowrap;
}

.spec th {
    padding: 0;
    text-align: center;
}

.spec-small {
    width: 148px;
}

.w-pos { width: 21px; }
.w-mark { width: 31px; }
.w-name { width: 79px; }
.w-qty { width: 33px; }
.w-l { width: 40px; }
.w-w { width: 48px; }
.w-dl { width: 42px; }
.w-dw { width: 43px; }
.w-gl { width: 37px; }
.w-gw { width: 37px; }
.w-paz { width: 20px; }
.w-edge { width: 75px; }
.w-note { width: 53px; }
.w-rect { width: 40px; }
.w-fit { width: 63px; }

.sheet-bottom {
    display: flex;
    align-items: flex-end;
    justify-content: space-between;
    margin-top: 24px;
}

.stamp {
    width: 132px;
    border: 2px solid #000;
    text-align: center;
}

.stamp > div {
    border-bottom: 2px solid #000;
    white-space: nowrap;
}

.stamp > .stamp-author {
    display: flex;
    border-bottom: none;
}

.stamp-code {
    font-family: "Liberation Sans", sans-serif;
    font-size: 11px;
    line-height: 17px;
}

.stamp-name {
    height: 33px;
    font-family: "Liberation Sans", sans-serif;
    font-size: 10px;
    line-height: 16px;
}

.stamp-type {
    font-size: 11px;
    line-height: 17px;
}

.stamp-line {
    display: flex;
    line-height: 11px;
}

.stamp-line span {
    width: 102px;
    padding-left: 2px;
    border-right: 2px solid #000;
    font-family: "Liberation Sans", sans-serif;
    font-size: 7px;
    text-align: left;
}

.stamp-line b {
    flex: 1;
    font-weight: normal;
}

.stamp-author span {
    width: 56px;
    padding-left: 2px;
    border-right: 2px solid #000;
    line-height: 11px;
    text-align: left;
}

/* document tabs */
.doc-tabs {
    display: flex;
    align-items: flex-start;
    height: 27px;
    padding: 2px 0 0 2px;
    border-top: 1px solid #d0d0d0;
    border-bottom: 1px solid #d0d0d0;
}

.doc-tab {
    display: flex;
    align-items: center;
    gap: 18px;
    height: 20px;
    padding: 0 7px 0 4px;
    border: 1px solid #dcdcdc;
    border-left: none;
    background-color: #f0f0f0;
}

.doc-tab a {
    color: inherit;
    text-decoration: none;
    white-space: nowrap;
}

.doc-tab path {
    stroke: #555;
    stroke-width: 2px;
}

.doc-tab-active {
    height: 23px;
    padding: 2px 6px 0 6px;
    background-color: #fff;
    border-top: none;
}

.doc-nav {
    display: flex;
    align-items: center;
    align-self: stretch;
    gap: 8px;
    margin-left: auto;
    padding: 0 8px 0 5px;
    border-left: 1px solid #d0d0d0;
}

.doc-nav .doc-list {
    height: 17px;
    padding-left: 5px;
    border-left: 1px solid #8c8c8c;
}

/* status bar */
.status-bar {
    display: flex;
    height: 32px;
}

.status-help,
.status-tools {
    display: flex;
    align-items: center;
    border-right: 1px solid #d0d0d0;
}

.status-help {
    width: 260px;
}

.status-tools {
    margin-left: 917px;
}

/* taskbar */
.taskbar {
    display: flex;
    height: 40px;
    background: linear-gradient(90deg, #21353f 0%, #20343f 65%, #1a2542 85%, #1a2340 100%);
    color: #fff;
}

.task {
    position: relative;
    width: 48px;
    margin-right: 1px;
    border-bottom: 2px solid transparent;
}

.task:first-child {
    margin-right: 3px;
}

.task-open {
    border-bottom-color: #76b9ed;
}

.task-alert {
    background-color: #a96832;
    border-bottom-color: #ff7a00;
}

.task-current {
    background-color: #4c616b;
    border-bottom-color: #76b9ed;
}

.badge {
    position: absolute;
    right: 10px;
    bottom: 3px;
    padding: 0 2px;
    border-radius: 2px;
    background-color: #f23c34;
    font-size: 8px;
    line-height: 11px;
}

.tray {
    display: flex;
    align-items: center;
    gap: 9px;
    margin-left: auto;
    padding-right: 4px;
}

.lang {
    margin-left: 2px;
}

.clock {
    margin-left: 4px;
    line-height: 18px;
    text-align: center;
}

.notify {
    width: 38px;
    margin-left: 6px;
    height: 40px;
    border-right: 1px solid #53607a;
    padding-right: 18px;
}
```
